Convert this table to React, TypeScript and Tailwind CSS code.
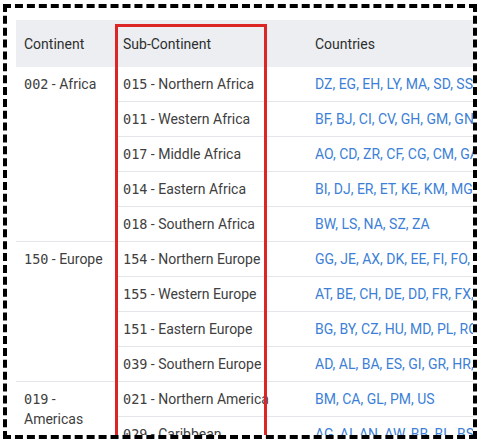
import React from 'react';

interface SubRegion {
  code: string;
  name: string;
  countries: string[];
}

interface Region {
  code: string;
  name: string;
  subs: SubRegion[];
}

const regions: Region[] = [
  {
    code: '002',
    name: 'Africa',
    subs: [
      { code: '015', name: 'Northern Africa', countries: ['DZ', 'EG', 'EH', 'LY', 'MA', 'SD', 'SS', 'TN'] },
      { code: '011', name: 'Western Africa', countries: ['BF', 'BJ', 'CI', 'CV', 'GH', 'GM', 'GN', 'GW', 'LR', 'ML', 'MR', 'NE', 'NG', 'SH', 'SL', 'SN', 'TG'] },
      { code: '017', name: 'Middle Africa', countries: ['AO', 'CD', 'ZR', 'CF', 'CG', 'CM', 'GA', 'GQ', 'ST', 'TD'] },
      { code: '014', name: 'Eastern Africa', countries: ['BI', 'DJ', 'ER', 'ET', 'KE', 'KM', 'MG', 'MU', 'MW', 'MZ', 'RE', 'RW', 'SC', 'SO', 'TZ', 'UG', 'YT', 'ZM', 'ZW'] },
      { code: '018', name: 'Southern Africa', countries: ['BW', 'LS', 'NA', 'SZ', 'ZA'] },
    ],
  },
  {
    code: '150',
    name: 'Europe',
    subs: [
      { code: '154', name: 'Northern Europe', countries: ['GG', 'JE', 'AX', 'DK', 'EE', 'FI', 'FO', 'GB', 'IE', 'IM', 'IS', 'LT', 'LV', 'NO', 'SE', 'SJ'] },
      { code: '155', name: 'Western Europe', countries: ['AT', 'BE', 'CH', 'DE', 'DD', 'FR', 'FX', 'LI', 'LU', 'MC', 'NL'] },
      { code: '151', name: 'Eastern Europe', countries: ['BG', 'BY', 'CZ', 'HU', 'MD', 'PL', 'RO', 'RU', 'SU', 'SK', 'UA'] },
      { code: '039', name: 'Southern Europe', countries: ['AD', 'AL', 'BA', 'ES', 'GI', 'GR', 'HR', 'IT', 'ME', 'MK', 'MT', 'RS', 'PT', 'SI', 'SM', 'VA', 'YU'] },
    ],
  },
  {
    code: '019',
    name: 'Americas',
    subs: [
      { code: '021', name: 'Northern America', countries: ['BM', 'CA', 'GL', 'PM', 'US'] },
      { code: '029', name: 'Caribbean', countries: ['AG', 'AI', 'AN', 'AW', 'BB', 'BL', 'BS', 'CU', 'DM', 'DO', 'GD', 'GP', 'HT'] },
    ],
  },
];

function Code({ value }: { value: string }) {
  return <span className="font-['DejaVu_Sans_Mono',monospace] text-[13.5px]">{value}</span>;
}

export default function App() {
  return (
    <div className="h-[445px] w-[484px] bg-white pl-[3px] pt-[4px] font-['Roboto',sans-serif] text-[14px] leading-5 text-[#404040]">
      <div className="relative h-[435px] w-[474px] overflow-hidden border-4 border-dashed border-black bg-white pl-[9px] pt-[12px]">
        <div className="w-[760px]">
          {/* header */}
          <div className="flex h-[47px] items-center bg-[#eceef1] text-[#2e2e2e]">
            <div className="w-[99px] shrink-0 px-2">Continent</div>
            <div className="w-[192px] shrink-0 px-2">Sub-Continent</div>
            <div className="px-2">Countries</div>
          </div>

          {regions.map((region) => (
            <div key={region.code} className="flex border-b border-[#e4e6e9]">
              <div className="w-[99px] shrink-0 px-2 pt-[7px]">
                <Code value={region.code} /> - {region.name}
              </div>
              <div className="flex-1">
                {region.subs.map((sub, i) => (
                  <div
                    key={sub.code}
                    className={
                      i < region.subs.length - 1
                        ? 'flex h-[35px] items-center border-b border-[#e4e6e9]'
                        : 'flex h-[34px] items-center'
                    }
                  >
                    <div className="w-[192px] shrink-0 px-2 whitespace-nowrap">
                      <Code value={sub.code} /> - {sub.name}
                    </div>
                    <div className="whitespace-nowrap px-2 text-[#3d7fd6]">
                      {sub.countries.join(', ')}
                    </div>
                  </div>
                ))}
              </div>
            </div>
          ))}
        </div>

        {/* highlight box */}
        <div className="absolute left-[108px] top-[16px] h-[460px] w-[152px] border-[3px] border-[#dc2626]" />
      </div>
    </div>
  );
}
